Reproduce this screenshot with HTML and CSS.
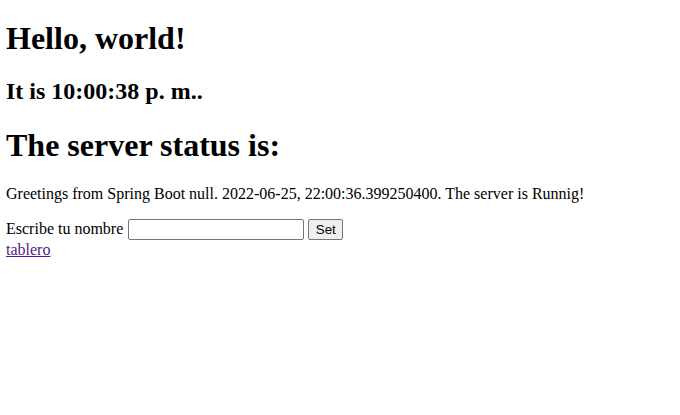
FILE: index.html
```html
<!DOCTYPE html>
<html>
<head>
<meta charset="utf-8">
<link rel="stylesheet" href="styles.css">
</head>
<body>
<h1 class="title">Hello, world!</h1>
<h2 class="time">It is 10:00:38 p. m..</h2>
<h1 class="status">The server status is:</h1>
<p class="greeting">Greetings from Spring Boot null. 2022-06-25, 22:00:36.399250400. The server is Runnig!</p>
<form class="name-form">Escribe tu nombre <input type="text" class="name-input"> <button type="button" class="set-btn">Set</button></form>
<a class="visited-link" href="#">tablero</a>
</body>
</html>
```
FILE: styles.css
```css
html, body {
  margin: 0;
  padding: 0;
}
body {
  font-family: "Liberation Serif", "Times New Roman", serif;
  font-size: 16px;
  color: #000;
  background: #fff;
  padding: 20px 6px 6px;
}
.title {
  font-size: 32px;
  line-height: 36px;
  margin: 0 0 21px;
}
.time {
  font-size: 24px;
  line-height: 28px;
  margin: 0 0 22px;
}
.status {
  font-size: 32px;
  line-height: 36px;
  margin: 0 0 22px;
}
.greeting {
  line-height: 18px;
  margin: 0 0 15px;
}
.name-form {
  margin: 0;
  line-height: 18px;
  height: 22px;
  display: flex;
  align-items: center;
}
.name-input {
  box-sizing: border-box;
  font-family: "Liberation Sans", Arial, sans-serif;
  font-size: 13.33px;
  width: 176px;
  height: 21px;
  margin: 0 4px 0 5px;
  padding: 1px 2px;
  border: 1px solid #767676;
  border-radius: 2px;
  background: #fff;
}
.set-btn {
  box-sizing: border-box;
  font-family: "Liberation Sans", Arial, sans-serif;
  font-size: 13.33px;
  height: 21px;
  width: 35px;
  margin: 0;
  padding: 0;
  border: 1px solid #767676;
  border-radius: 2px;
  background: #efefef;
  color: #000;
}
.visited-link {
  display: block;
  width: max-content;
  line-height: 18px;
  margin-top: 1px;
  color: #551a8b;
}
```
